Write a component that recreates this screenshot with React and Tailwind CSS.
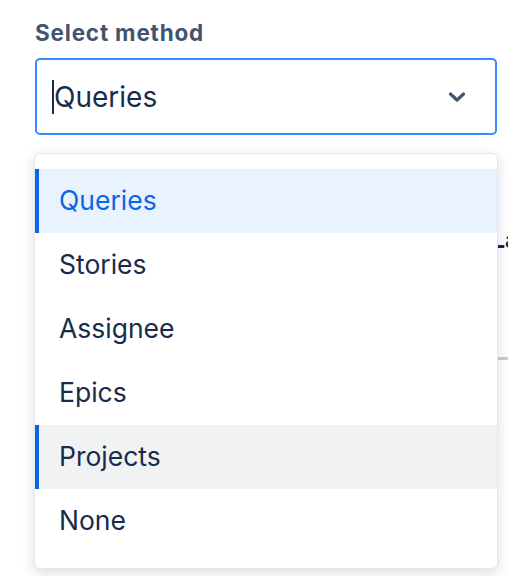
import { useState } from 'react';

const options = ['Queries', 'Stories', 'Assignee', 'Epics', 'Projects', 'None'];

const font = { fontFamily: 'Inter, "Noto Sans", sans-serif' };

function Chevron() {
  return (
    <svg width="20" height="14" viewBox="0 0 20 14" aria-hidden="true">
      <path
        d="M3.5 4 10 10l6.5-6"
        fill="none"
        stroke="#44546f"
        strokeWidth="3.2"
        strokeLinecap="round"
        strokeLinejoin="round"
      />
    </svg>
  );
}

export default function App() {
  const [selected] = useState('Queries');
  const hovered = 'Projects';

  return (
    <div className="relative h-[576px] w-[508px] overflow-hidden bg-white" style={font}>
      <div className="px-[35px] pt-[18px]">
        <p className="text-[22.5px] font-bold leading-[30px] tracking-[0.8px] text-[#44546f]">Select method</p>
        <div className="mt-[10px] flex h-[77px] w-[462px] items-center justify-between rounded-[5px] border-2 border-[#388bff] pl-[15px] pr-[28px]">
          <div className="flex items-center">
            <span className="h-[34px] w-[2px] bg-[#172b4d]" />
            <span className="text-[28px] leading-none text-[#172b4d]">Queries</span>
          </div>
          <Chevron />
        </div>
      </div>

      {/* content under the menu */}
      <div className="mt-[88px] flex justify-end">
        <span className="mr-[-11px] text-[24px] font-bold leading-[34px] text-[#172b4d]">La</span>
      </div>
      <div className="mt-[100px] ml-[40px] h-[3px] bg-[#c8ccd3]" />

      <div className="absolute left-[34px] top-[153px] w-[464px] rounded-[6px] border border-[#e4e6ea] bg-white py-[15px] shadow-[0_4px_14px_rgba(9,30,66,0.15)]">
        {options.map((opt) => {
          const isSel = opt === selected;
          const isHover = opt === hovered;
          return (
            <div
              key={opt}
              className={[
                'flex h-[64px] items-center border-l-4 pl-[20px] text-[26.5px]',
                isSel
                  ? 'border-[#0c66e4] bg-[#e9f2ff] text-[#0c66e4]'
                  : isHover
                    ? 'border-[#0c66e4] bg-[#f1f2f4] text-[#172b4d]'
                    : 'border-transparent text-[#172b4d]',
              ].join(' ')}
            >
              {opt}
            </div>
          );
        })}
      </div>
    </div>
  );
}
